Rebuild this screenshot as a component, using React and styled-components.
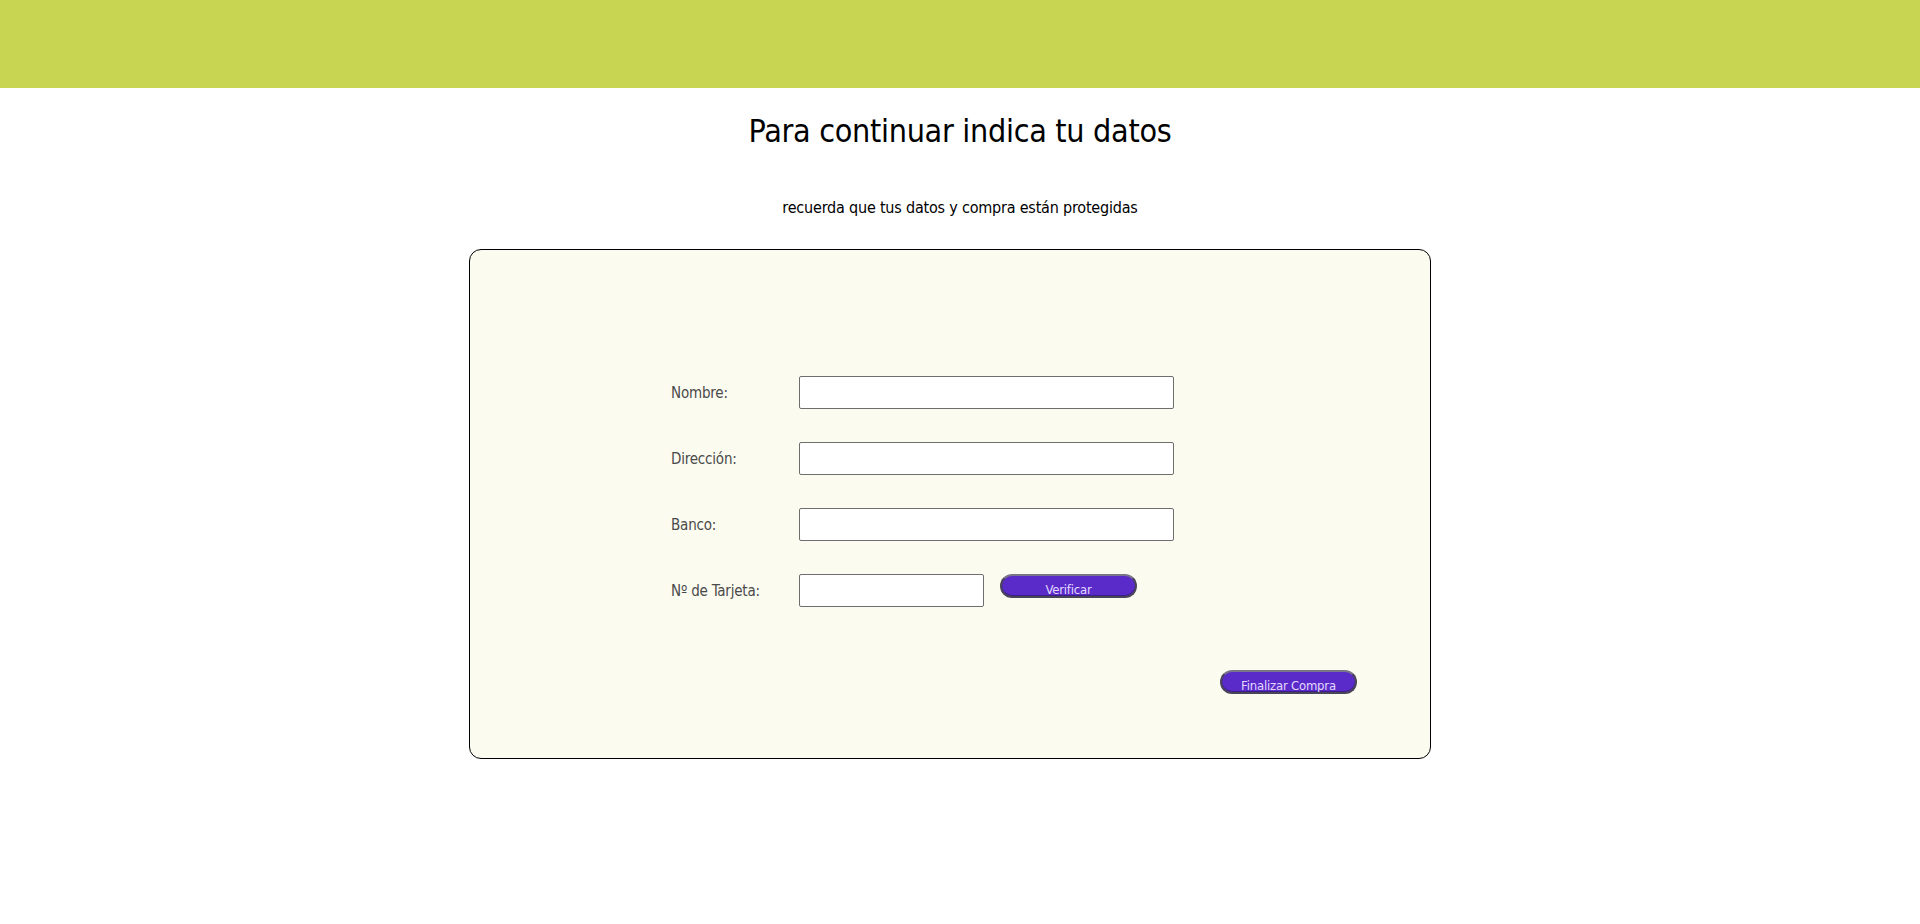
import React, { useState } from "react";
import styled, { createGlobalStyle } from "styled-components";

const GlobalStyle = createGlobalStyle`
    body {
        margin: 0;
        background: #ffffff;
        font-family: "DejaVu Sans Condensed", "DejaVu Sans", "Liberation Sans", sans-serif;
        font-stretch: condensed;
    }
`;

const Header = styled.header`
    height: 88px;
    background-color: #c8d552;
`;

const Main = styled.main`
    display: flex;
    flex-direction: column;
    padding-bottom: 80px;
`;

const Title = styled.h1`
    margin: 23px 0 0;
    text-align: center;
    font-size: 32px;
    font-weight: 400;
    color: #000;
    line-height: 40px;
    letter-spacing: -0.3px;
`;

const Subtitle = styled.p`
    margin: 47px 0 0;
    text-align: center;
    font-size: 16px;
    color: #000;
    line-height: 20px;
    letter-spacing: -0.2px;
`;

const Card = styled.section`
    box-sizing: border-box;
    width: 962px;
    height: 510px;
    margin: 31px 0 0 469px;
    padding: 126px 73px 0 201px;
    background-color: #fbfbf0;
    border: 1px solid #000;
    border-radius: 12px;
    display: flex;
    flex-direction: column;
`;

const Form = styled.form`
    display: grid;
    grid-template-columns: 128px 375px;
    row-gap: 33px;
    align-items: center;
`;

const Label = styled.label`
    font-size: 15px;
    color: #4a4a4a;
    letter-spacing: -0.2px;
`;

const Input = styled.input`
    box-sizing: border-box;
    width: ${({ $w }) => $w || "375px"};
    height: 33px;
    border: 1px solid #6e6e6e;
    border-radius: 2px;
    background: #fff;
    font-size: 16px;
    padding: 0 6px;
`;

const InlineRow = styled.div`
    display: flex;
    align-items: flex-start;
    gap: 16px;
`;

const PillButton = styled.button`
    box-sizing: border-box;
    width: 137px;
    height: 24px;
    padding: 5px 0 0;
    border: 2px solid #4a4458;
    border-top-color: #7a7488;
    border-radius: 12px;
    background-color: #5a2bc8;
    color: #e2d8ff;
    font-family: inherit;
    font-size: 13px;
    line-height: 18px;
    letter-spacing: -0.2px;
    overflow: hidden;
    cursor: pointer;
    box-shadow: inset 0 -1px 0 #3a1c8a;
`;

const Footer = styled.div`
    display: flex;
    justify-content: flex-end;
    margin-top: 63px;
`;

const fields = [
    { id: "nombre", label: "Nombre:" },
    { id: "direccion", label: "Dirección:" },
    { id: "banco", label: "Banco:" },
];

const App = () => {
    const [data, setData] = useState({ nombre: "", direccion: "", banco: "", tarjeta: "" });

    const handleChange = (e) => {
        const { name, value } = e.target;
        setData((prev) => ({ ...prev, [name]: value }));
    };

    return (
        <>
            <GlobalStyle />
            <Header />
            <Main>
                <Title>Para continuar indica tu datos</Title>
                <Subtitle>recuerda que tus datos y compra están protegidas</Subtitle>
                <Card>
                    <Form onSubmit={(e) => e.preventDefault()}>
                        {fields.map((f) => (
                            <React.Fragment key={f.id}>
                                <Label htmlFor={f.id}>{f.label}</Label>
                                <Input id={f.id} name={f.id} value={data[f.id]} onChange={handleChange} />
                            </React.Fragment>
                        ))}
                        <Label htmlFor="tarjeta">Nº de Tarjeta:</Label>
                        <InlineRow>
                            <Input
                                id="tarjeta"
                                name="tarjeta"
                                $w="185px"
                                value={data.tarjeta}
                                onChange={handleChange}
                            />
                            <PillButton type="button">Verificar</PillButton>
                        </InlineRow>
                    </Form>
                    <Footer>
                        <PillButton type="submit">Finalizar Compra</PillButton>
                    </Footer>
                </Card>
            </Main>
        </>
    );
};

export default App;
